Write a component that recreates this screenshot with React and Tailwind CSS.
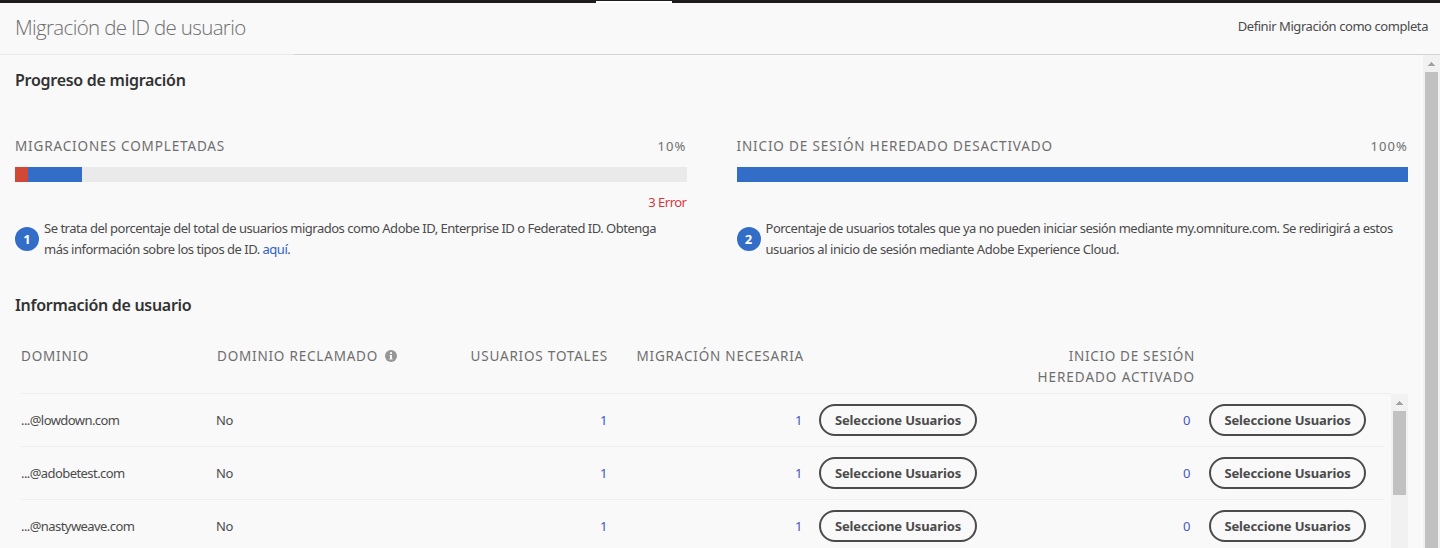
const ROWS = ["...@lowdown.com", "...@adobetest.com", "...@nastyweave.com"];

function InfoIcon() {
  return (
    <svg width="12" height="12" viewBox="0 0 12 12" className="block">
      <circle cx="6" cy="6" r="6" fill="#969696" />
      <rect x="5" y="2" width="2" height="2" rx="0.6" fill="#f9f9f9" />
      <path d="M4.5 5H7v3.6h.6v.9H4.4v-.9H5V5.8h-.5z" fill="#f9f9f9" />
    </svg>
  );
}

function ScrollUp() {
  return (
    <div className="flex h-[17px] items-start justify-center pt-[7px]">
      <svg width="7" height="4" viewBox="0 0 7 4" shapeRendering="crispEdges">
        <path d="M3 0h1v1h1v1h1v1h1v1H0V3h1V2h1V1h1z" fill="#a3a3a3" />
      </svg>
    </div>
  );
}

function SelectButton({ className }) {
  return (
    <button
      className={`${className} h-8 shrink-0 rounded-full border-2 border-[#4b4b4b] text-center text-[13px] leading-[26px] font-bold tracking-[-0.12px] whitespace-nowrap text-[#4b4b4b]`}
    >
      Seleccione Usuarios
    </button>
  );
}

function Progress({ label, percent, children, error, number, text }) {
  return (
    <section className="min-w-0 flex-1">
      <div className="flex h-[21px] justify-between text-[13.5px] leading-[21px] tracking-[0.86px] text-[#6e6e6e]">
        <span>{label}</span>
        <span className="text-[13px] tracking-[1.1px]">{percent}</span>
      </div>
      <div className="mt-[10px] flex h-[15px] bg-[#eaeaea]">{children}</div>
      <div className="mt-[10px] h-[21px] text-right text-[13px] leading-[21px] tracking-[-0.5px] text-[#d7373f]">
        {error}
      </div>
      <div className="mt-[5px] flex items-center gap-[5px]">
        <div className="flex size-6 shrink-0 items-center justify-center rounded-full bg-[#326dc8] text-[13px] leading-none font-bold text-white">
          {number}
        </div>
        <p className="text-[13px] leading-[21px] tracking-[-0.49px] whitespace-nowrap text-[#4b4b4b]">
          {text}
        </p>
      </div>
    </section>
  );
}

export default function App() {
  return (
    <div className="flex h-[548px] w-[1440px] flex-col overflow-hidden bg-[#f9f9f9] font-['Noto_Sans','Open_Sans',sans-serif] text-[#4b4b4b]">
      <div className="flex h-[3px] shrink-0 items-end bg-[#1e1c1c] pl-[596px]">
        <div className="h-0.5 w-[76px] bg-white" />
      </div>

      <header className="flex h-[51px] shrink-0 items-center justify-between pr-3 pl-[15px]">
        <h1 className="pb-0.5 font-['Open_Sans',sans-serif] text-[20.5px] font-light tracking-[-0.65px] text-[#6e6e6e]">
          Migración de ID de usuario
        </h1>
        <a className="pb-1 text-[13px] leading-[21px] tracking-[-0.43px]">Definir Migración como completa</a>
      </header>
      <div className="flex h-px shrink-0">
        <div className="w-[294px] bg-[#eaeaea]" />
        <div className="flex-1 bg-[#d4d4d4]" />
      </div>

      <div className="flex min-h-0 flex-1">
        <main className="flex w-[1423px] flex-col overflow-hidden pl-[15px] pr-[15px]">
          <h2 className="mt-[13px] h-6 shrink-0 text-[16px] leading-6 font-semibold tracking-[-0.27px] text-[#323232]">
            Progreso de migración
          </h2>

          <div className="mt-[44px] flex shrink-0 gap-[50px]">
            <Progress
              label="MIGRACIONES COMPLETADAS"
              percent="10%"
              error="3 Error"
              number="1"
              text={
                <>
                  Se trata del porcentaje del total de usuarios migrados como Adobe ID, Enterprise ID o Federated ID. Obtenga
                  <br />
                  más información sobre los tipos de ID. <a className="text-[#2f62c8]">aquí</a>.
                </>
              }
            >
              <div className="w-[13px] bg-[#d24836]" />
              <div className="w-[54px] bg-[#326dc8]" />
            </Progress>
            <Progress
              label="INICIO DE SESIÓN HEREDADO DESACTIVADO"
              percent="100%"
              number="2"
              text={
                <>
                  Porcentaje de usuarios totales que ya no pueden iniciar sesión mediante my.omniture.com. Se redirigirá a estos
                  <br />
                  <span className="tracking-[-0.44px]">
                    usuarios al inicio de sesión mediante Adobe Experience Cloud.
                  </span>
                </>
              }
            >
              <div className="w-full bg-[#326dc8]" />
            </Progress>
          </div>

          <h2 className="mt-[33px] h-6 shrink-0 text-[16px] leading-6 font-semibold tracking-[-0.3px] text-[#323232]">
            Información de usuario
          </h2>

          <div className="mt-[28px] ml-[6px] flex h-[49px] w-[1370px] shrink-0 border-b border-[#eeeeee] pt-px text-[13.5px] leading-[21px] tracking-[0.8px] text-[#6e6e6e]">
            <div className="w-[196px]">DOMINIO</div>
            <div className="flex h-[21px] w-[209px] items-center gap-[7px] pb-px">
              DOMINIO RECLAMADO <InfoIcon />
            </div>
            <div className="w-[182px] text-right">USUARIOS TOTALES</div>
            <div className="w-[196px] text-right">MIGRACIÓN NECESARIA</div>
            <div className="w-[391px] text-right">
              <span className="tracking-[0.7px]">INICIO DE SESIÓN</span>
              <br />
              <span className="tracking-[0.96px]">HEREDADO ACTIVADO</span>
            </div>
          </div>

          <div className="flex min-h-0 flex-1">
            <div className="ml-[6px] w-[1364px] shrink-0">
              {ROWS.map((domain) => (
                <div
                  key={domain}
                  className="flex h-[53px] items-center border-b border-[#eeeeee] text-[13px] leading-[21px] tracking-[-0.5px]"
                >
                  <div className="w-[195px] tracking-[-0.57px]">{domain}</div>
                  <div className="w-[210px]">No</div>
                  <div className="w-[181px] text-right text-[#3f57c4]">1</div>
                  <div className="w-[195px] text-right text-[#3f57c4]">1</div>
                  <SelectButton className="ml-[17px] w-[158px]" />
                  <div className="w-[213px] text-right text-[#3f57c4]">0</div>
                  <SelectButton className="ml-[19px] w-[157px]" />
                </div>
              ))}
            </div>
            <div className="ml-[6px] w-[17px] shrink-0 bg-[#f1f1f1]">
              <ScrollUp />
              <div className="mx-0.5 h-[84px] bg-[#c1c1c1]" />
            </div>
          </div>
        </main>

        <div className="flex w-[17px] shrink-0 flex-col bg-[#f1f1f1]">
          <ScrollUp />
          <div className="mx-0.5 flex-1 bg-[#c1c1c1]" />
        </div>
      </div>
    </div>
  );
}
